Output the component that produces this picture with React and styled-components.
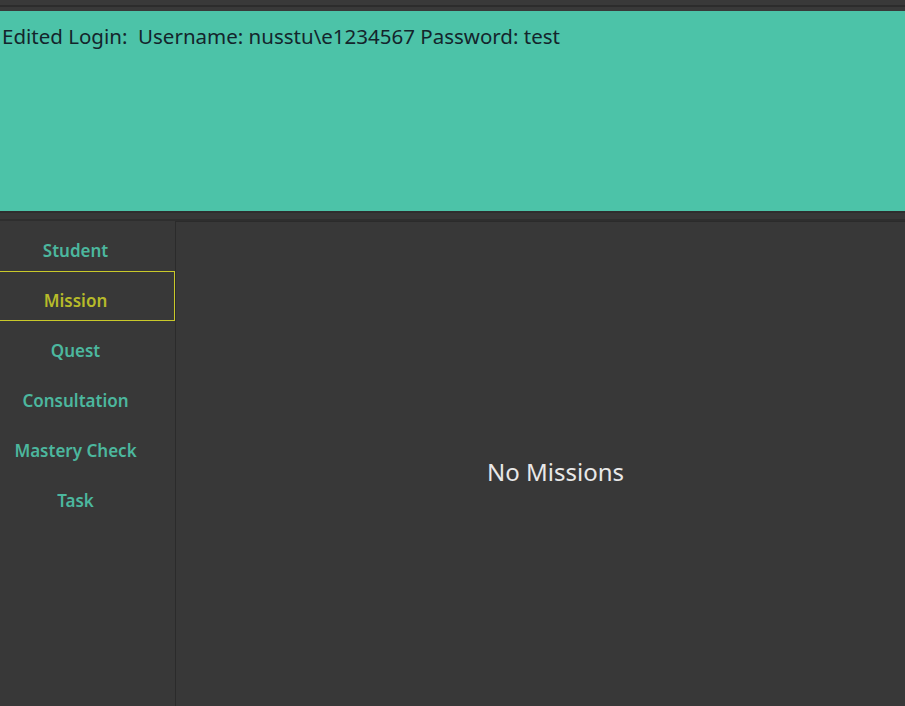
import React from "react";
import styled, { createGlobalStyle } from "styled-components";

const Global = createGlobalStyle`
  html, body { margin: 0; padding: 0; background: #383838; overflow: hidden; }
  body { font-family: "Noto Sans", "Open Sans", sans-serif; }
  #root { height: 706px; overflow: hidden; }
`;

const TopBar = styled.div`
  height: 11px;
  background: #393939;
  display: flex;
  flex-direction: column;
  justify-content: center;
  &::after {
    content: "";
    display: block;
    height: 2px;
    background: #2c2c2c;
  }
`;

const Banner = styled.div`
  height: 200px;
  background: #4cc3a8;
  box-sizing: border-box;
  padding: 11px 0 0 2px;
`;

const BannerText = styled.div`
  font-size: 20.5px;
  color: #14252c;
  white-space: pre;
`;

const Separator = styled.div`
  height: 10px;
  box-sizing: border-box;
  background: #373737;
  border-top: 2px solid #2e2e2e;
  border-bottom: 2px solid #2e2e2e;
`;

const Main = styled.div`
  display: flex;
  align-items: flex-start;
`;

const Sidebar = styled.nav`
  width: 175px;
  flex: none;
  display: flex;
  flex-direction: column;
`;

const NavItem = styled.div`
  height: 50px;
  box-sizing: border-box;
  display: flex;
  align-items: center;
  justify-content: center;
  padding: 9px 23px 0 0;
  font-size: 17px;
  font-weight: 600;
  color: ${(p) => (p.$active ? "#b7bb2a" : "#4cb79e")};
  border: 1px solid ${(p) => (p.$active ? "#c9c92a" : "transparent")};
  border-left: none;
`;

const Panel = styled.section`
  flex: 1;
  height: 502px;
  box-sizing: border-box;
  margin-right: -30px;
  border-left: 1px solid #2b2b2b;
  border-top: 1px solid #2b2b2b;
  background: #383838;
  display: flex;
  align-items: center;
  justify-content: center;
`;

const EmptyText = styled.div`
  font-size: 24px;
  color: #e8e8e8;
  padding-bottom: 2px;
`;

const items = ["Student", "Mission", "Quest", "Consultation", "Mastery Check", "Task"];

export default function App() {
  return (
    <>
      <Global />
      <TopBar />
      <Banner>
        <BannerText>{"Edited Login:  Username: nusstu\\e1234567 Password: test"}</BannerText>
      </Banner>
      <Separator />
      <Main>
        <Sidebar>
          {items.map((it) => (
            <NavItem key={it} $active={it === "Mission"}>
              {it}
            </NavItem>
          ))}
        </Sidebar>
        <Panel>
          <EmptyText>No Missions</EmptyText>
        </Panel>
      </Main>
    </>
  );
}
